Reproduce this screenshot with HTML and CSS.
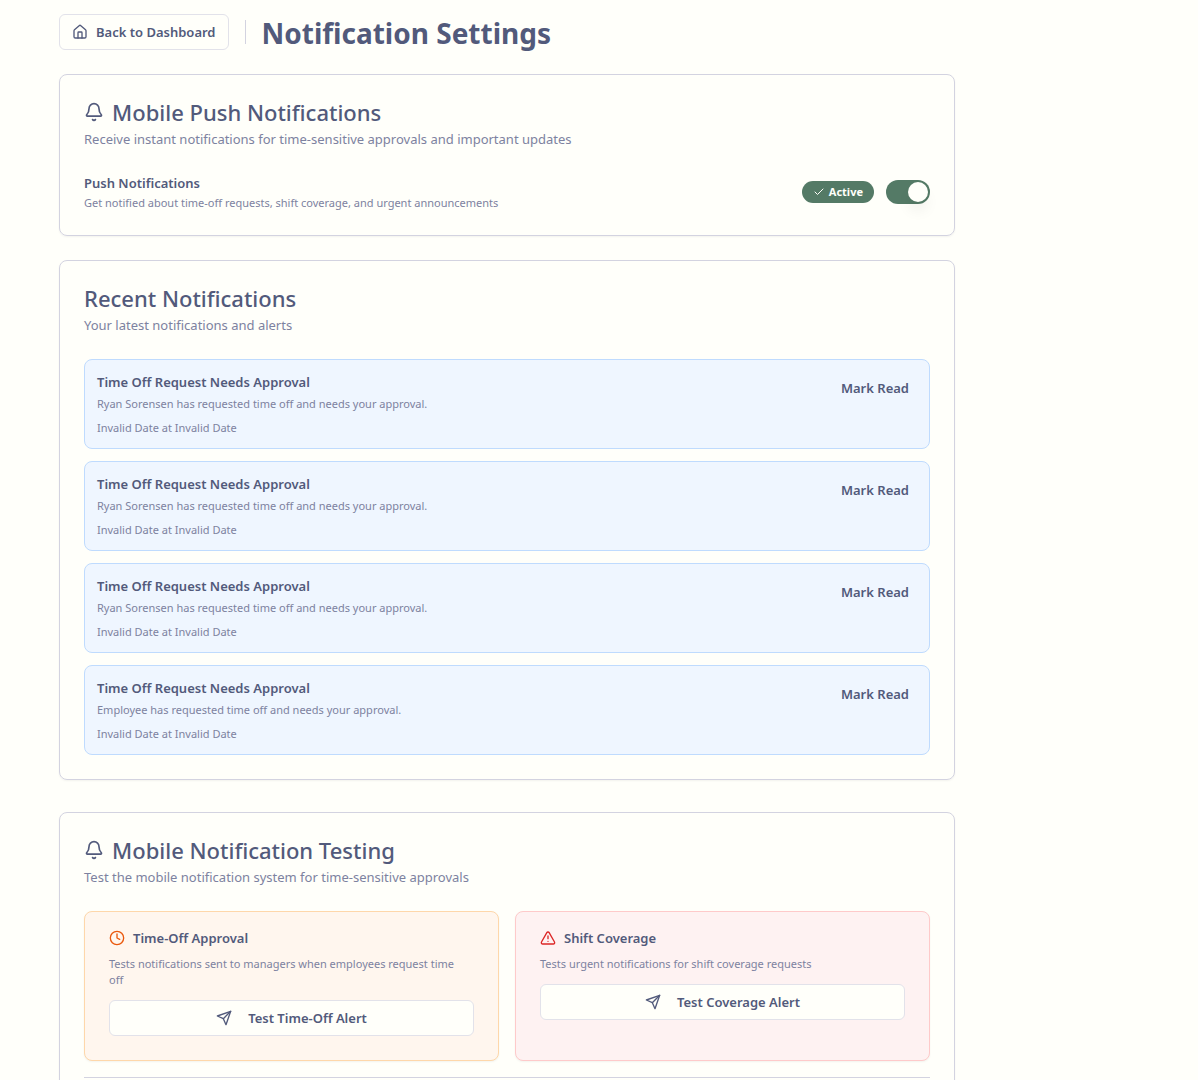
FILE: index.html
```html
<!DOCTYPE html>
<html lang="en">
<head>
<meta charset="utf-8">
<meta name="viewport" content="width=device-width, initial-scale=1">
<title>Notification Settings</title>
<link rel="stylesheet" href="styles.css">
</head>
<body>
<svg class="sprite" aria-hidden="true">
  <symbol id="home" viewBox="0 0 24 24"><path d="M15 21v-8a1 1 0 0 0-1-1h-4a1 1 0 0 0-1 1v8"/><path d="M3 10a2 2 0 0 1 .709-1.528l7-5.999a2 2 0 0 1 2.582 0l7 5.999A2 2 0 0 1 21 10v9a2 2 0 0 1-2 2H5a2 2 0 0 1-2-2z"/></symbol>
  <symbol id="bell" viewBox="0 0 24 24"><path d="M10.268 21a2 2 0 0 0 3.464 0"/><path d="M3.262 15.326A1 1 0 0 0 4 17h16a1 1 0 0 0 .74-1.673C19.41 13.956 18 12.499 18 8A6 6 0 0 0 6 8c0 4.499-1.411 5.956-2.738 7.326"/></symbol>
  <symbol id="check" viewBox="0 0 24 24"><path d="M20 6 9 17l-5-5"/></symbol>
  <symbol id="clock" viewBox="0 0 24 24"><circle cx="12" cy="12" r="10"/><path d="M12 6v6l4 2"/></symbol>
  <symbol id="alert" viewBox="0 0 24 24"><path d="m21.73 18-8-14a2 2 0 0 0-3.48 0l-8 14A2 2 0 0 0 4 21h16a2 2 0 0 0 1.73-3"/><path d="M12 9v4"/><path d="M12 17h.01"/></symbol>
  <symbol id="send" viewBox="0 0 24 24"><path d="m22 2-7 20-4-9-9-4Z"/><path d="M22 2 11 13"/></symbol>
</svg>
<main class="page">
  <div class="content">
    <header class="page-header">
      <a class="button" href="#"><svg class="icon"><use href="#home"/></svg>Back to Dashboard</a>
      <span class="divider"></span>
      <h1>Notification Settings</h1>
    </header>

    <section class="card">
      <div class="card-header">
        <h2><svg class="icon icon-lg"><use href="#bell"/></svg>Mobile Push Notifications</h2>
        <p>Receive instant notifications for time-sensitive approvals and important updates</p>
      </div>
      <div class="setting">
        <div class="setting-text">
          <label class="label" for="push">Push Notifications</label>
          <p class="small">Get notified about time-off requests, shift coverage, and urgent announcements</p>
        </div>
        <span class="badge"><svg class="icon icon-sm"><use href="#check"/></svg>Active</span>
        <input class="switch" type="checkbox" role="switch" id="push" checked>
      </div>
    </section>

    <section class="card">
      <div class="card-header">
        <h2>Recent Notifications</h2>
        <p>Your latest notifications and alerts</p>
      </div>
      <ul class="notices">
        <li class="notice">
          <div>
            <h3 class="label">Time Off Request Needs Approval</h3>
            <p class="small message">Ryan Sorensen has requested time off and needs your approval.</p>
            <p class="small">Invalid Date at Invalid Date</p>
          </div>
          <button class="ghost" type="button">Mark Read</button>
        </li>
        <li class="notice">
          <div>
            <h3 class="label">Time Off Request Needs Approval</h3>
            <p class="small message">Ryan Sorensen has requested time off and needs your approval.</p>
            <p class="small">Invalid Date at Invalid Date</p>
          </div>
          <button class="ghost" type="button">Mark Read</button>
        </li>
        <li class="notice">
          <div>
            <h3 class="label">Time Off Request Needs Approval</h3>
            <p class="small message">Ryan Sorensen has requested time off and needs your approval.</p>
            <p class="small">Invalid Date at Invalid Date</p>
          </div>
          <button class="ghost" type="button">Mark Read</button>
        </li>
        <li class="notice">
          <div>
            <h3 class="label">Time Off Request Needs Approval</h3>
            <p class="small message">Employee has requested time off and needs your approval.</p>
            <p class="small">Invalid Date at Invalid Date</p>
          </div>
          <button class="ghost" type="button">Mark Read</button>
        </li>
      </ul>
    </section>

    <section class="card testing">
      <div class="card-header">
        <h2><svg class="icon icon-lg"><use href="#bell"/></svg>Mobile Notification Testing</h2>
        <p>Test the mobile notification system for time-sensitive approvals</p>
      </div>
      <div class="tests">
        <article class="test test-timeoff">
          <h3 class="label"><svg class="icon"><use href="#clock"/></svg>Time-Off Approval</h3>
          <p class="small">Tests notifications sent to managers when employees request time off</p>
          <button class="button wide" type="button"><svg class="icon"><use href="#send"/></svg>Test Time-Off Alert</button>
        </article>
        <article class="test test-coverage">
          <h3 class="label"><svg class="icon"><use href="#alert"/></svg>Shift Coverage</h3>
          <p class="small">Tests urgent notifications for shift coverage requests</p>
          <button class="button wide" type="button"><svg class="icon"><use href="#send"/></svg>Test Coverage Alert</button>
        </article>
      </div>
      <hr>
    </section>
  </div>
</main>
</body>
</html>
```
FILE: styles.css
```css
:root {
  --background: #fffffa;
  --text: #525a7b;
  --muted: #7d82a0;
  --border: #d3d3e0;
  --border-soft: #e2e2ea;
  --green: #547a66;
}

*, *::before, *::after { box-sizing: border-box; }

h1, h2, h3, p, ul { margin: 0; padding: 0; }

body {
  margin: 0;
  background: var(--background);
  color: var(--text);
  font-family: "Noto Sans", "Open Sans", sans-serif;
  font-size: 13px;
  line-height: 20px;
}

.sprite { position: absolute; width: 0; height: 0; }

.page {
  max-width: 1080px;
  margin: 0 auto;
  padding: 14px 0;
}

.content {
  max-width: 896px;
  display: flex;
  flex-direction: column;
  gap: 24px;
}

.page-header {
  display: flex;
  align-items: center;
  gap: 16px;
  height: 36px;
}

h1 {
  padding-top: 2px;
  font-size: 28px;
  line-height: 36px;
  font-weight: 700;
}

.divider { width: 1px; height: 24px; background: var(--border); }

.icon {
  width: 16px;
  height: 16px;
  flex: none;
  fill: none;
  stroke: currentColor;
  stroke-width: 2;
  stroke-linecap: round;
  stroke-linejoin: round;
}

.icon-lg { width: 20px; height: 20px; }
.icon-sm { width: 12px; height: 12px; }

.button {
  display: inline-flex;
  align-items: center;
  justify-content: center;
  gap: 8px;
  height: 36px;
  padding: 0 12px;
  border: 1px solid var(--border-soft);
  border-radius: 6px;
  background: var(--background);
  color: var(--text);
  font: inherit;
  font-weight: 600;
  text-decoration: none;
  white-space: nowrap;
}

.wide { display: flex; width: 100%; gap: 16px; }

.card {
  padding: 24px;
  border: 1px solid var(--border);
  border-radius: 8px;
  box-shadow: 0 1px 2px rgb(0 0 0 / 5%);
}

.testing { margin-top: 8px; }

.card-header {
  display: flex;
  flex-direction: column;
  gap: 4px;
  margin-bottom: 24px;
  color: var(--muted);
}

h2 {
  display: flex;
  align-items: center;
  gap: 8px;
  color: var(--text);
  font-size: 22px;
  line-height: 26px;
  font-weight: 500;
}

.setting { display: flex; align-items: center; gap: 12px; }

.setting-text {
  flex: 1;
  display: flex;
  flex-direction: column;
  gap: 2px;
}

.label { font-size: 13px; line-height: 20px; font-weight: 600; }

.small {
  color: var(--muted);
  font-size: 11px;
  line-height: 16px;
}

.badge {
  display: inline-flex;
  align-items: center;
  gap: 4px;
  height: 22px;
  padding: 0 11px;
  border-radius: 11px;
  background: var(--green);
  color: var(--background);
  font-size: 11px;
  line-height: 16px;
  font-weight: 700;
}

.switch {
  appearance: none;
  display: flex;
  align-items: center;
  justify-content: flex-end;
  width: 44px;
  height: 24px;
  margin: 0;
  padding: 2px;
  border-radius: 12px;
  background: var(--green);
}

.switch::before {
  content: "";
  width: 20px;
  height: 20px;
  border-radius: 50%;
  background: var(--background);
  box-shadow: 0 10px 15px -3px rgb(0 0 0 / 10%);
}

.switch:not(:checked) { justify-content: flex-start; background: var(--border); }

.notices {
  display: flex;
  flex-direction: column;
  gap: 12px;
  list-style: none;
}

.notice {
  display: flex;
  align-items: flex-start;
  justify-content: space-between;
  padding: 12px;
  border: 1px solid #bfdbfe;
  border-radius: 8px;
  background: #eff6ff;
}

.message { margin: 4px 0 8px; }

.ghost {
  height: 32px;
  padding: 0 8px;
  border: 0;
  background: none;
  color: var(--text);
  font: inherit;
  font-weight: 600;
}

.tests { display: grid; grid-template-columns: 1fr 1fr; gap: 16px; }

.test {
  padding: 16px 24px 24px;
  border: 1px solid;
  border-radius: 8px;
  box-shadow: 0 1px 2px rgb(0 0 0 / 5%);
}

.test-timeoff { border-color: #fed7aa; background: #fff6ee; }
.test-coverage { border-color: #fecaca; background: #fef2f2; }
.test-timeoff h3 .icon { color: #ea580c; }
.test-coverage h3 .icon { color: #dc2626; }

.test h3 { display: flex; align-items: center; gap: 8px; }
.test p { margin: 8px 0 12px; padding-right: 8px; }

hr {
  margin: 16px 0 0;
  border: 0;
  border-top: 1px solid var(--border);
}
```
